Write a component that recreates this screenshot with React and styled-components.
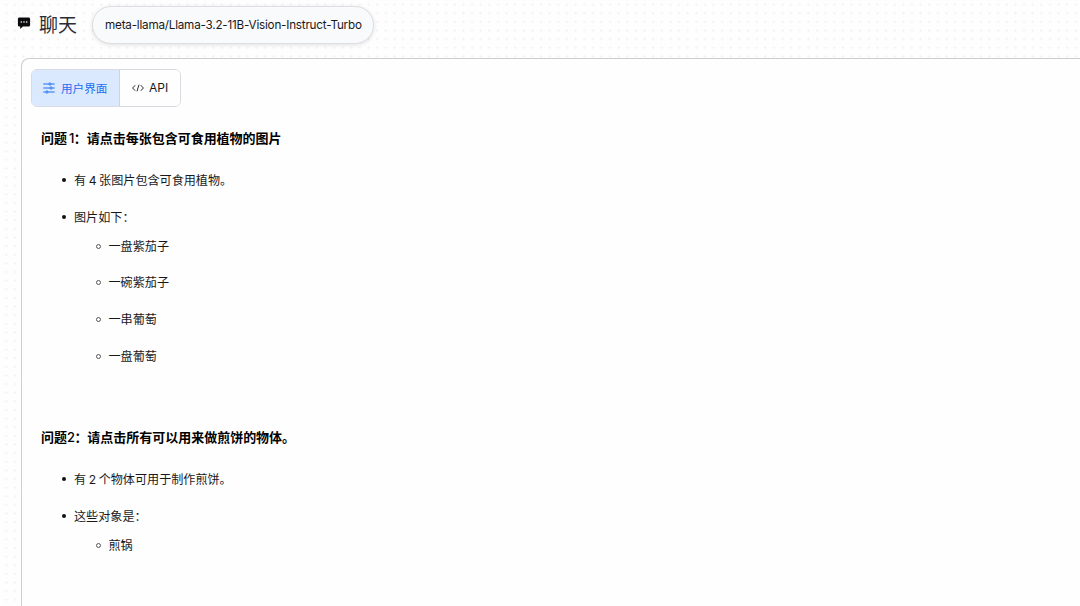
import React from 'react';
import styled, { createGlobalStyle } from 'styled-components';

const sections = [
  {
    title: ['问题', ' 1', '：请点击每张包含可食用植物的图片'],
    points: [
      { text: '有 4 张图片包含可食用植物。' },
      { text: '图片如下：', items: ['一盘紫茄子', '一碗紫茄子', '一串葡萄', '一盘葡萄'] },
    ],
  },
  {
    title: ['问题', '2', '：请点击所有可以用来做煎饼的物体。'],
    points: [
      { text: '有 2 个物体可用于制作煎饼。' },
      { text: '这些对象是：', items: ['煎锅'] },
    ],
  },
];

const ChatIcon = () => (
  <ChatSvg viewBox="0 0 14 13">
    <path
      fill="#0b0b0d"
      d="M2.4.4h9.2c.9 0 1.5.6 1.5 1.5v6.2c0 .9-.6 1.5-1.5 1.5H5.9L3.2 12V9.6h-.8C1.5 9.6.9 9 .9 8.1V1.9C.9 1 1.5.4 2.4.4z"
    />
    <g fill="#fff">
      <circle cx="4.3" cy="5" r=".8" />
      <circle cx="7" cy="5" r=".8" />
      <circle cx="9.7" cy="5" r=".8" />
    </g>
  </ChatSvg>
);

const SlidersIcon = () => (
  <SlidersSvg viewBox="0 0 12 12">
    <path d="M.3 2h5.4M8.1 2h3.6M.3 6h6.6M9.3 6h2.4M.3 10h2.4M5.100 10h6.600" />
    <circle cx="6.9" cy="2" r="1.1" />
    <circle cx="8.1" cy="6" r="1.1" />
    <circle cx="3.9" cy="10" r="1.1" />
  </SlidersSvg>
);

const CodeIcon = () => (
  <CodeSvg viewBox="0 0 12 8">
    <path d="M3.2 1.2.6 4l2.6 2.8M8.8 1.2 11.4 4 8.8 6.8M7 .7 5 7.3" />
  </CodeSvg>
);

const App = () => {
  return (
    <>
      <GlobalStyle />
      <Page>
        <Header>
          <ChatIcon />
          <Title>聊天</Title>
          <ModelPill>meta-llama/Llama-3.2-11B-Vision-Instruct-Turbo</ModelPill>
        </Header>
        <Panel>
          <Tabs>
            <Tab $active>
              <SlidersIcon />
              <TabLabel>用户界面</TabLabel>
            </Tab>
            <Tab>
              <CodeIcon />
              <ApiLabel>API</ApiLabel>
            </Tab>
          </Tabs>
          {sections.map(({ title, points }) => (
            <Section key={title[2]}>
              <Question>
                {title[0]}
                <Digit>{title[1]}</Digit>
                {title[2]}
              </Question>
              <PointList>
                {points.map((point) => (
                  <Point key={point.text}>
                    {point.text}
                    {point.items && (
                      <SubList>
                        {point.items.map((item) => (
                          <SubItem key={item}>{item}</SubItem>
                        ))}
                      </SubList>
                    )}
                  </Point>
                ))}
              </PointList>
            </Section>
          ))}
        </Panel>
      </Page>
    </>
  );
};

export default App;

const GlobalStyle = createGlobalStyle`
  *,
  *::before {
    box-sizing: border-box;
  }

  body {
    margin: 0;
    overflow: hidden;
    font-family: Inter, 'Noto Sans CJK SC', sans-serif;
    color: #19191b;
  }
`;

const Page = styled.div`
  display: flex;
  flex-direction: column;
  height: 606px;
  padding-left: 21px;
  overflow: hidden;
  background-color: #fefefe;
  background-image: radial-gradient(circle, #f0f0f1 0.8px, transparent 1.3px);
  background-size: 8.633px 8.633px;
  background-position: 2px 0.3px;
`;

const Header = styled.header`
  display: flex;
  flex: none;
  align-items: center;
  height: 58px;
  margin-left: -4px;
  padding-bottom: 8px;
`;

const ChatSvg = styled.svg`
  flex: none;
  width: 14px;
  height: 13px;
  margin-top: -3px;
`;

const Title = styled.h1`
  margin: 1px 15px 0 8px;
  font-size: 19px;
  font-weight: 400;
  line-height: 28px;
  color: #2c2c36;
`;

const ModelPill = styled.div`
  display: flex;
  align-items: center;
  flex: none;
  width: 282px;
  height: 38px;
  padding-left: 12px;
  border: 1px solid #dedfe2;
  border-radius: 19px;
  background: #f9fafc;
  box-shadow: 0 1px 4px rgba(0, 0, 0, 0.12);
  font-size: 11.7px;
  letter-spacing: -0.215px;
  white-space: nowrap;
`;

const Panel = styled.main`
  flex: 1;
  min-height: 0;
  padding: 10px 0 0 9px;
  border: 1px solid #cecece;
  border-width: 1px 0 0 1px;
  border-top-left-radius: 8px;
  background: #fefefe;
`;

const Tabs = styled.div`
  display: flex;
  width: 150px;
  height: 38px;
  margin-bottom: 21px;
  border: 1px solid #d8dbe0;
  border-radius: 6px;
  overflow: hidden;
`;

const Tab = styled.button`
  display: flex;
  align-items: center;
  flex: none;
  width: ${(props) => (props.$active ? '88px' : '60px')};
  padding: 0 0 0 ${(props) => (props.$active ? '11px' : '12px')};
  border: 0;
  border-right: ${(props) => (props.$active ? '1px solid #c9d3e3' : '0')};
  background: ${(props) => (props.$active ? '#dbe9fe' : '#fefefe')};
  color: ${(props) => (props.$active ? '#1f6ff2' : '#18181b')};
  font-family: inherit;
`;

const SlidersSvg = styled.svg`
  width: 12px;
  height: 12px;
  fill: none;
  stroke: currentColor;
  stroke-width: 1;
`;

const CodeSvg = styled.svg`
  width: 12px;
  height: 8px;
  fill: none;
  stroke: currentColor;
  stroke-width: 0.9;
`;

const TabLabel = styled.span`
  margin-left: 6px;
  font-size: 11.6px;
  white-space: nowrap;
`;

const ApiLabel = styled.span`
  margin: -2px 0 0 5px;
  font-size: 12px;
`;

const Section = styled.section`
  margin-left: 10px;
  margin-bottom: 60.2px;
  font-size: 12.1px;
  line-height: 20px;
  word-spacing: -0.8px;
`;

const Question = styled.h2`
  margin: 0 0 22.8px;
  font-size: 13px;
  font-weight: 700;
  line-height: 20px;
  letter-spacing: -0.02px;
  color: #000;
`;

const Digit = styled.span`
  font-weight: 500;
  letter-spacing: -0.6px;
`;

const PointList = styled.ul`
  margin: 0;
  padding-left: 33px;
  list-style: none;
`;

const Point = styled.li`
  margin-bottom: 16.8px;

  &::before {
    content: '';
    display: inline-block;
    width: 4px;
    height: 4px;
    margin: 0 8px 0 -12px;
    border-radius: 50%;
    background: #111;
    vertical-align: 2.5px;
  }
`;

const SubList = styled.ul`
  margin: 9px 0 0;
  padding-left: 34.5px;
  list-style: none;
`;

const SubItem = styled.li`
  margin-bottom: 16.8px;

  &::before {
    content: '';
    display: inline-block;
    width: 5px;
    height: 5px;
    margin: 0 8px 0 -13px;
    border: 1px solid #555;
    border-radius: 50%;
    vertical-align: 2px;
  }
`;
